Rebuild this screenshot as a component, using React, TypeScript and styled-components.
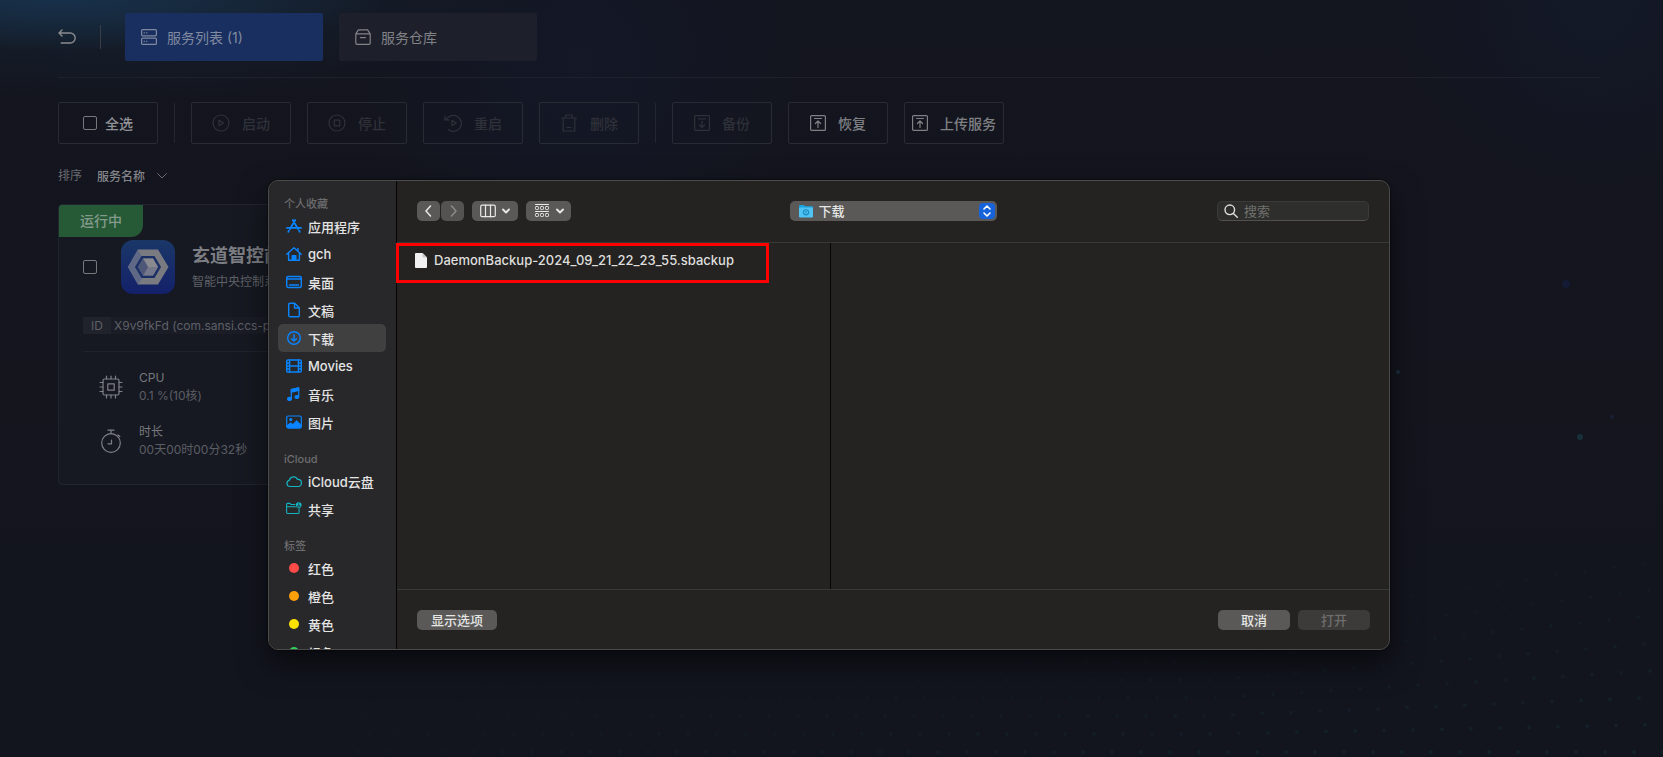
import React from 'react';
import styled, { createGlobalStyle, css } from 'styled-components';

const Global = createGlobalStyle`
  * { box-sizing: border-box; }
  html, body { margin: 0; min-height: 100%; background: #13141d; }
  body, button, input, select {
    font-family: Inter, 'Noto Sans CJK SC', sans-serif;
  }
  h2, h3, p, ul, dl, dd { margin: 0; padding: 0; }
  ul { list-style: none; }
  button { cursor: pointer; }
`;

/* ---------- page ---------- */

const Page = styled.div`
  position: relative;
  min-height: 100vh;
  padding: 13px 63px 40px 58px;
  overflow: hidden;
  color: #7f8086;
  background:
    radial-gradient(ellipse 330px 50px at 60px 0, #18304a 0%, rgba(24, 48, 74, 0) 100%),
    radial-gradient(ellipse 420px 100px at 100px 0, rgba(22, 40, 56, 0.7) 0%, rgba(22, 40, 56, 0) 100%),
    radial-gradient(circle 220px at 580px 60px, rgba(20, 26, 44, 0.6) 0%, rgba(20, 26, 44, 0) 100%),
    radial-gradient(circle 200px at 96% 0, rgba(20, 26, 42, 0.8) 0%, rgba(20, 26, 42, 0) 100%),
    linear-gradient(180deg, #13151f 0%, #14151d 50%, #12151e 100%);
`;

const Starfield = styled.svg`
  position: absolute;
  right: 0;
  bottom: 0;
  width: 100%;
  height: 100%;
  pointer-events: none;
`;

const Header = styled.header`
  display: flex;
  align-items: center;
  gap: 24px;
  height: 65px;
  padding-bottom: 16px;
  border-bottom: 1px solid #1e212b;
`;

const BackButton = styled.button`
  display: flex;
  padding: 0;
  border: 0;
  background: none;
  color: #8a8b8f;
`;

const Divider = styled.span<{ $height: number; $tone: string }>`
  width: 1px;
  height: ${p => p.$height}px;
  background: ${p => p.$tone};
`;

const Tabs = styled.nav`
  display: flex;
  gap: 16px;
`;

const Tab = styled.button<{ $active?: boolean }>`
  display: flex;
  align-items: center;
  gap: 10px;
  width: 198px;
  height: 48px;
  padding: 0 16px;
  border: 0;
  border-radius: 2px;
  font-size: 14px;
  color: ${p => (p.$active ? '#8089a0' : '#828387')};
  background: ${p => (p.$active ? '#182f5f' : '#1d1f2b')};
`;

const Toolbar = styled.div`
  display: flex;
  align-items: center;
  gap: 16px;
  margin-top: 24px;
`;

const actionBox = css`
  display: flex;
  align-items: center;
  justify-content: center;
  width: 100px;
  height: 42px;
  padding: 0;
  border: 1px solid #292b34;
  border-radius: 2px;
  background: none;
  font-size: 14px;
  font-weight: 500;
  white-space: nowrap;
`;

const Action = styled.button`
  ${actionBox}
  gap: 12px;
  color: #7f8084;
  &:disabled { color: #2f3139; cursor: default; }
`;

const SelectAll = styled.label`
  ${actionBox}
  gap: 8px;
  color: #919296;
`;

const Checkbox = styled.input`
  appearance: none;
  width: 14px;
  height: 14px;
  margin: 0;
  border: 1px solid #77787c;
  border-radius: 2px;
`;

const SortRow = styled.div`
  display: flex;
  align-items: center;
  gap: 15px;
  height: 20px;
  margin-top: 22px;
  font-size: 12px;
  line-height: 18px;
  color: #696a70;
`;

const SortField = styled.span`
  display: flex;
  align-items: center;
  gap: 11px;
`;

const SortSelect = styled.select`
  appearance: none;
  padding: 0;
  border: 0;
  background: none;
  font-size: 12px;
  font-weight: 500;
  color: #85868a;
`;

/* ---------- service card ---------- */

const Card = styled.article`
  position: relative;
  width: 376px;
  min-height: 281px;
  margin-top: 18px;
  padding: 35px 24px 0;
  border: 1px solid #20252e;
  border-radius: 4px;
  background: #161921;
`;

const Status = styled.span`
  position: absolute;
  top: 0;
  left: 0;
  width: 84px;
  height: 32px;
  border-radius: 3px 0 12px 0;
  background: #265a37;
  font-size: 14px;
  font-weight: 500;
  line-height: 32px;
  text-align: center;
  color: #859a8c;
`;

const CardHead = styled.div`
  display: flex;
  align-items: center;
`;

const AppIcon = styled.svg`
  width: 54px;
  height: 54px;
  margin: 0 17px 0 24px;
`;

const CardTitle = styled.h2`
  font-size: 18px;
  font-weight: 600;
  line-height: 26px;
  white-space: nowrap;
  color: #7d7e83;
`;

const CardNote = styled.p`
  margin-top: 4px;
  font-size: 12px;
  line-height: 18px;
  color: #5f6168;
`;

const IdRow = styled.p`
  display: flex;
  margin-top: 23px;
  gap: 3px;
  height: 17px;
  font-size: 12px;
  line-height: 17px;
  white-space: nowrap;
  color: #5f6168;
  background: #1a1c26;
`;

const IdTag = styled.span`
  width: 28px;
  text-align: center;
  background: #20222c;
`;

const Stats = styled.dl`
  display: grid;
  gap: 18px;
  margin-top: 17px;
  padding: 17px 0 0 16px;
  border-top: 1px solid #20232c;
`;

const Stat = styled.div`
  display: grid;
  grid-template-columns: 24px 1fr;
  column-gap: 16px;
  align-items: center;
  font-size: 12px;
  line-height: 18px;
`;

const StatIcon = styled.span`
  grid-row: span 2;
  display: flex;
`;

const StatName = styled.dt`color: #77787d;`;
const StatValue = styled.dd`color: #5c5e65;`;

/* ---------- file dialog ---------- */

const DialogLayer = styled.div`
  position: absolute;
  inset: 0;
  padding: 180px 273px 0 268px;
`;

const Dialog = styled.section`
  position: relative;
  display: grid;
  grid-template-columns: 128px minmax(0, 1fr);
  height: 470px;
  border: 1px solid #4b4b4a;
  border-radius: 10px;
  background: #242321;
  box-shadow: 0 14px 30px rgba(0, 0, 0, 0.5), 0 0 2px #000;
  font-size: 13px;
  color: #dededd;
`;

const Sidebar = styled.aside`
  overflow: hidden;
  padding: 13px 9px 0;
  border-right: 1px solid #050505;
  border-radius: 9px 0 0 9px;
  background: #28282a;
`;

const Group = styled.section`
  & + & { margin-top: 13px; }
`;

const GroupTitle = styled.h3`
  height: 18px;
  padding-left: 6px;
  font-size: 11px;
  font-weight: 500;
  line-height: 20px;
  color: #6d6d6f;
`;

const Place = styled.button<{ $selected?: boolean; $tint?: string }>`
  display: flex;
  align-items: center;
  gap: 6px;
  width: 108px;
  height: 28px;
  padding: 0 8px;
  border: 0;
  border-radius: 5px;
  background: ${p => (p.$selected ? '#404041' : 'none')};
  font-size: 13px;
  font-weight: 500;
  white-space: nowrap;
  color: #e4e4e4;
  svg { flex: none; color: ${p => p.$tint ?? '#0a84ff'}; }
`;

const Dot = styled.span<{ $color: string }>`
  width: 10px;
  height: 10px;
  margin: 0 3px;
  border-radius: 50%;
  background: ${p => p.$color};
`;

const Main = styled.div`
  display: grid;
  grid-template-rows: 62px 1fr 60px;
`;

const DialogBar = styled.div`
  display: grid;
  grid-template-columns: 1fr 207px 1fr;
  align-items: center;
  padding: 0 20px 1px;
  border-bottom: 1px solid #383836;
`;

const BarGroup = styled.div`
  display: flex;
  gap: 8px;
`;

const NavPair = styled.div`
  display: flex;
  gap: 1px;
`;

const ToolButton = styled.button<{ $width: number }>`
  display: flex;
  align-items: center;
  justify-content: center;
  gap: 6px;
  width: ${p => p.$width}px;
  height: 20px;
  padding: 0;
  border: 0;
  border-radius: 5px;
  background: #5a5957;
  color: #e9e9e8;
  &:disabled { background: #545351; color: #8c8c8a; }
`;

const FolderField = styled.label`
  display: flex;
  align-items: center;
  gap: 6px;
  height: 20px;
  padding: 0 2px 0 9px;
  border-radius: 5px;
  background: #5a5957;
`;

const FolderSelect = styled.select`
  flex: 1;
  appearance: none;
  padding: 0;
  border: 0;
  background: none;
  font-size: 13px;
  font-weight: 500;
  color: #e6e6e5;
`;

const Stepper = styled.svg`
  width: 16px;
  height: 16px;
  border-radius: 4px;
  background: #1763dc;
`;

const SearchField = styled.label`
  display: flex;
  align-items: center;
  justify-self: end;
  gap: 6px;
  width: 152px;
  height: 20px;
  padding: 0 6px;
  border: 1px solid #3a3a38;
  border-bottom-color: #50504e;
  border-radius: 5px;
  background: #2e2e2c;
  svg { flex: none; }
`;

const SearchInput = styled.input`
  width: 100%;
  min-width: 0;
  padding: 0;
  border: 0;
  background: none;
  font-size: 13px;
  color: #e0e0e0;
  outline: none;
  &::placeholder { color: #71716f; opacity: 1; }
`;

const Columns = styled.div`
  display: grid;
  grid-template-columns: 433px 1fr;
`;

const Column = styled.ul`
  & + & { border-left: 1px solid #050505; }
`;

const FileRow = styled.li`
  display: flex;
  align-items: center;
  gap: 7px;
  width: 373px;
  height: 40px;
  margin-left: -1px;
  padding: 0 16px 6px;
  border: 3px solid #fe0000;
  font-weight: 500;
  white-space: nowrap;
`;

const Footer = styled.footer`
  display: flex;
  align-items: center;
  gap: 8px;
  padding: 0 19px 0 20px;
  border-top: 1px solid #383836;
`;

const FooterButton = styled.button<{ $width: number }>`
  width: ${p => p.$width}px;
  height: 20px;
  padding: 0;
  border: 0;
  border-radius: 5px;
  background: #5a5957;
  font-size: 13px;
  font-weight: 500;
  line-height: 20px;
  color: #e6e6e5;
  &:first-child { margin-right: auto; }
  &:disabled { background: #3c3b39; color: #6d6d6b; }
`;

/* ---------- icons ---------- */

type IconProps = { size?: number; w?: number; vb?: string; sw?: number; children: React.ReactNode };
const Icon = ({ size = 16, w, vb = '0 0 16 16', sw = 1.2, children }: IconProps) => (
  <svg width={w ?? size} height={size} viewBox={vb} fill="none" stroke="currentColor" strokeWidth={sw} strokeLinejoin="round" strokeLinecap="round" aria-hidden="true">
    {children}
  </svg>
);

const icons = {
  back: <Icon size={18} vb="0 0 18 18" sw={1.4}><path d="M1 5h11.2a5 5 0 0 1 0 10H3.2M4 2 1 5l3 3" /></Icon>,
  servers: <Icon><rect x=".6" y=".6" width="14.8" height="6.2" rx="1" /><rect x=".6" y="9.2" width="14.8" height="6.2" rx="1" /><path d="M3.2 3.6v.4M5.8 3.6v.4M3.2 12.2v.4M5.8 12.2v.4" /></Icon>,
  store: <Icon><path d="M.8 4.8 3.4.8h9.2l2.6 4v9.2a1.3 1.3 0 0 1-1.3 1.3H2.1A1.3 1.3 0 0 1 .8 14zM.8 4.8h14.4M5.5 8.6h5" /></Icon>,
  start: <Icon size={18} vb="0 0 18 18"><circle cx="9" cy="9" r="8" /><path d="M7 6.3v5.4L11.4 9z" /></Icon>,
  stop: <Icon size={18} vb="0 0 18 18"><circle cx="9" cy="9" r="8" /><rect x="6.2" y="6.2" width="5.6" height="5.6" /></Icon>,
  restart: <Icon size={18} vb="0 0 18 18"><path d="M2.4 5.4A8 8 0 1 1 4.2 15.5M1 2v4h4.2M8 6.3v5.4L12.2 9z" /></Icon>,
  trash: <Icon size={18} vb="0 0 18 18"><path d="M1.5 4h15M5.8 4V1h6.4v3M3.2 4v13h11.6V4M7 13.5h4" /></Icon>,
  backup: <Icon><rect x=".6" y=".6" width="14.8" height="14.8" rx="1" /><path d="M4.5 3.8h7M8 6v6.5M5.4 10 8 12.5l2.6-2.5" /></Icon>,
  restore: <Icon><rect x=".6" y=".6" width="14.8" height="14.8" rx="1" /><path d="M4.5 3.5h7M8 12.5V6M5.4 8.5 8 6l2.6 2.5" /></Icon>,
  chevron: <Icon size={10} vb="0 0 10 10" sw={1}><path d="m.5 2.5 4.5 4.5 4.5-4.5" /></Icon>,
  cpu: <Icon size={24} vb="0 0 24 24"><rect x="4" y="4" width="16" height="16" rx="1.5" /><rect x="8.8" y="8.8" width="6.4" height="6.4" /><path d="M7.5 4V1M12 4V1M16.5 4V1M7.5 23v-3M12 23v-3M16.5 23v-3M4 7.5H1M4 12H1M4 16.5H1M23 7.5h-3M23 12h-3M23 16.5h-3" /></Icon>,
  clock: <Icon size={24} vb="0 0 24 24"><circle cx="12" cy="14" r="9.3" /><path d="M9 1.2h6M12 1.2v3.5M19 6l1.8 1.5M12.5 11v3.8H9" /></Icon>,
  apps: <Icon sw={1.8}><path d="M9.2 2 4 11M6.8 2 12 11M1 9.9h8.6M12.4 9.9H15M2.9 12.6 2.3 13.800M13.100 12.600l.6 1.200" /></Icon>,
  home: <Icon sw={1.4}><path d="m.8 8.3 7.2-6.6 7.2 6.6M2.6 7v7.2h10.8V7M12 4.6V2.5" /><path d="M6.2 14.2V9.8h3.6v4.4z" fill="currentColor" /></Icon>,
  desktop: <Icon sw={1.4}><rect x=".7" y="2.5" width="14.6" height="11" rx="1.5" /><path d="M.7 5h14.6M3.5 11h9" /></Icon>,
  doc: <Icon sw={1.4}><path d="M2.7 2.6a1.4 1.4 0 0 1 1.4-1.4h4.6l4.6 4.6v7.6a1.4 1.4 0 0 1-1.4 1.4H4.1a1.4 1.4 0 0 1-1.4-1.4zM8.5 1.4V6h4.6" /></Icon>,
  download: <Icon sw={1.4}><circle cx="8" cy="8" r="6.3" /><path d="M8 4.6V11M5.5 8.7 8 11.1l2.5-2.4" /></Icon>,
  film: <Icon sw={1.4}><rect x=".7" y="2" width="14.6" height="12" rx="1.2" /><path d="M3.6 2v12M12.4 2v12M3.6 8h8.8M.8 5h2.6M.8 8h2.6M.8 11h2.6M12.6 5h2.6M12.6 8h2.6M12.6 11h2.6" /></Icon>,
  music: <Icon><path d="M5.3 12.5V3.7l7.4-1.9v8.7" /><path d="M5.3 3.7l7.4-1.9v2.6L5.3 6.2z" fill="currentColor" /><ellipse cx="3.5" cy="12.9" rx="1.9" ry="1.5" fill="currentColor" /><ellipse cx="10.9" cy="11" rx="1.9" ry="1.5" fill="currentColor" /></Icon>,
  picture: <Icon><rect x=".7" y="2" width="14.6" height="12" rx="1.5" /><circle cx="4.8" cy="5.6" r="1" fill="currentColor" /><path d="m1.2 12 3.4-3 2.3 1.8L10.6 7l4.4 4.4v1.4a1 1 0 0 1-1 1H2z" fill="currentColor" /></Icon>,
  cloud: <Icon><path d="M4 13.5a3.1 3.1 0 0 1-.7-6.1 4.4 4.4 0 0 1 8.3-.9 3.5 3.5 0 0 1 .6 7z" /></Icon>,
  shared: <Icon vb="0 1 18 16"><path d="M10 4H5.7L4.4 2.7H1.7a1 1 0 0 0-1 1V13a1 1 0 0 0 1 1h12a1 1 0 0 0 1-1V8.5M.7 6.5h10" /><circle cx="14.3" cy="4.5" r="3.2" fill="currentColor" stroke="none" /><path d="M14.3 3.2v.4M13 6c.5-.8 2.1-.8 2.6 0" stroke="#28282a" /></Icon>,
  left: <Icon size={12} vb="0 0 12 12" sw={1.5}><path d="M7.5 1 3 6l4.5 5" /></Icon>,
  right: <Icon size={12} vb="0 0 12 12" sw={1.5}><path d="m4.5 1 4.5 5-4.5 5" /></Icon>,
  columns: <Icon size={14} w={16} vb="0 0 16 14"><rect x=".7" y="1.2" width="14.6" height="11.5" rx="1.5" /><path d="M5.5 1.2v11.5M10.5 1.2v11.5" /></Icon>,
  down: <Icon size={8} vb="0 0 8 8" sw={1.8}><path d="m1 2.5 3 3 3-3" /></Icon>,
  grid: (
    <Icon size={14} w={16} vb="0 0 16 14" sw={1}>
      <path d="M1.5.5h13M1.5 7.5h13" />
      {[3, 8, 13].map(x => [4, 11].map(y => <rect key={`${x}-${y}`} x={x - 1.5} y={y - 1.5} width="3" height="3" rx=".8" />))}
    </Icon>
  ),
  search: <Icon size={14} vb="0 0 14 14" sw={1.4}><circle cx="5.8" cy="5.8" r="4.8" /><path d="m9.4 9.4 3.9 3.9" /></Icon>,
};

const FolderIcon = () => (
  <svg width="14" height="14" viewBox="0 0 14 14" aria-hidden="true">
    <path d="M0 2a1 1 0 0 1 1-1h4l1.3 1.2H13a1 1 0 0 1 1 1V5H0z" fill="#1ba3df" />
    <rect y="3.5" width="14" height="10" rx="1" fill="#4fc3f4" />
    <circle cx="7" cy="8.3" r="2.6" fill="none" stroke="#1c89bf" strokeWidth="1.1" />
    <path d="M7 7v2.5" stroke="#1c89bf" />
  </svg>
);

const FileIcon = () => (
  <svg width="12" height="15" viewBox="0 0 12 15" aria-hidden="true">
    <path d="M0 1a1 1 0 0 1 1-1h6.5L12 4.5V14a1 1 0 0 1-1 1H1a1 1 0 0 1-1-1z" fill="#f1f1f1" />
    <path d="M7.5 0 12 4.5H8.5a1 1 0 0 1-1-1z" fill="#c9c9c9" />
  </svg>
);

const AppLogo = () => (
  <AppIcon viewBox="0 0 54 54" aria-hidden="true">
    <defs>
      <linearGradient id="tile" x1="0" y1="0" x2="0" y2="1"><stop offset="0" stopColor="#1a3768" /><stop offset="1" stopColor="#14216a" /></linearGradient>
    </defs>
    <rect width="54" height="54" rx="12" fill="url(#tile)" />
    <path d="M17 9.5h20L47.5 27 37 44.500H17L7 27z" fill="#7a7b80" />
    <path d="M17 9.5 7 27l10 17.500 4-6L14.500 27l6-11z" fill="#5f6885" />
    <path d="M20.5 16h13L40 27l-6.500 11h-13L14 27z" fill="#1a2f66" />
    <path d="M22 18.5h10l5 8.500-5 8.500H22L17 27z" fill="#6d7184" />
    <path d="M22 18.5h10l5 8.500H27z" fill="#888a8f" />
    <path d="M27 27h10l-5 8.500H22z" fill="#74788a" />
    <path d="M22 18.5 27 27l-5 8.500L17 27z" fill="#4f5779" />
  </AppIcon>
);

/* ---------- data ---------- */

const favorites = [
  { name: '应用程序', icon: icons.apps },
  { name: 'gch', icon: icons.home },
  { name: '桌面', icon: icons.desktop },
  { name: '文稿', icon: icons.doc },
  { name: '下载', icon: icons.download, selected: true },
  { name: 'Movies', icon: icons.film },
  { name: '音乐', icon: icons.music },
  { name: '图片', icon: icons.picture },
];

const cloudPlaces = [
  { name: 'iCloud云盘', icon: icons.cloud },
  { name: '共享', icon: icons.shared },
];

const tags = [
  { name: '红色', color: '#ff4b47' },
  { name: '橙色', color: '#ff9f0a' },
  { name: '黄色', color: '#ffe000' },
  { name: '绿色', color: '#30d158' },
];

const runActions = [
  { name: '启动', icon: icons.start },
  { name: '停止', icon: icons.stop },
  { name: '重启', icon: icons.restart },
  { name: '删除', icon: icons.trash },
];

const dataActions = [
  { name: '备份', icon: icons.backup, disabled: true },
  { name: '恢复', icon: icons.restore },
  { name: '上传服务', icon: icons.restore },
];

const stars = [
  [1398, 372, 2, '#1a2f3e'], [1566, 284, 4, '#141a33'], [1580, 437, 3, '#17313a'], [1612, 417, 2, '#191f35'],
] as const;

const dust = Array.from({ length: 8 }, (_, row) =>
  Array.from({ length: 46 }, (_, col) => ({
    x: 1663 - col * 29 + ((row * 11) % 17),
    y: 752 - row * 18 - Math.max(0, 16 - col) * row * 0.6,
    o: Math.max(0, 0.9 - row * 0.08 - col * 0.014),
  })),
).flat();

export default function App() {
  return (
    <>
      <Global />
      <Page>
        <Starfield viewBox="0 0 1663 757" preserveAspectRatio="xMaxYMax slice" aria-hidden="true">
          {dust.map((d, i) => <circle key={i} cx={d.x} cy={d.y} r="2" fill="#15232d" opacity={d.o} />)}
          {stars.map(([x, y, r, c]) => <circle key={x} cx={x} cy={y} r={r} fill={c} />)}
        </Starfield>

        <Header>
          <BackButton aria-label="返回">{icons.back}</BackButton>
          <Divider $height={24} $tone="#3a3d45" />
          <Tabs>
            <Tab $active>{icons.servers}服务列表 (1)</Tab>
            <Tab>{icons.store}服务仓库</Tab>
          </Tabs>
        </Header>

        <Toolbar>
          <SelectAll><Checkbox type="checkbox" />全选</SelectAll>
          <Divider $height={40} $tone="#23252f" />
          {runActions.map(a => <Action key={a.name} disabled>{a.icon}{a.name}</Action>)}
          <Divider $height={40} $tone="#23252f" />
          {dataActions.map(a => <Action key={a.name} disabled={a.disabled}>{a.icon}{a.name}</Action>)}
        </Toolbar>

        <SortRow>
          <label htmlFor="sort">排序</label>
          <SortField>
            <SortSelect id="sort"><option>服务名称</option></SortSelect>
            {icons.chevron}
          </SortField>
        </SortRow>

        <Card>
          <Status>运行中</Status>
          <CardHead>
            <Checkbox type="checkbox" aria-label="选择服务" />
            <AppLogo />
            <div>
              <CardTitle>玄道智控前端</CardTitle>
              <CardNote>智能中央控制系统</CardNote>
            </div>
          </CardHead>
          <IdRow><IdTag>ID</IdTag>X9v9fkFd (com.sansi.ccs-p</IdRow>
          <Stats>
            <Stat><StatIcon>{icons.cpu}</StatIcon><StatName>CPU</StatName><StatValue>0.1 %(10核)</StatValue></Stat>
            <Stat><StatIcon>{icons.clock}</StatIcon><StatName>时长</StatName><StatValue>00天00时00分32秒</StatValue></Stat>
          </Stats>
        </Card>

        <DialogLayer>
          <Dialog role="dialog" aria-label="打开文件">
            <Sidebar>
              <Group>
                <GroupTitle>个人收藏</GroupTitle>
                {favorites.map(f => <Place key={f.name} $selected={f.selected}>{f.icon}{f.name}</Place>)}
              </Group>
              <Group>
                <GroupTitle>iCloud</GroupTitle>
                {cloudPlaces.map(c => <Place key={c.name} $tint="#12b5c4">{c.icon}{c.name}</Place>)}
              </Group>
              <Group>
                <GroupTitle>标签</GroupTitle>
                {tags.map(t => <Place key={t.name}><Dot $color={t.color} />{t.name}</Place>)}
              </Group>
            </Sidebar>
            <Main>
              <DialogBar>
                <BarGroup>
                  <NavPair>
                    <ToolButton $width={23} aria-label="后退">{icons.left}</ToolButton>
                    <ToolButton $width={23} aria-label="前进" disabled>{icons.right}</ToolButton>
                  </NavPair>
                  <ToolButton $width={46} aria-label="分栏">{icons.columns}{icons.down}</ToolButton>
                  <ToolButton $width={45} aria-label="分组">{icons.grid}{icons.down}</ToolButton>
                </BarGroup>
                <FolderField>
                  <FolderIcon />
                  <FolderSelect aria-label="位置"><option>下载</option></FolderSelect>
                  <Stepper viewBox="0 0 16 16" fill="none" stroke="#fff" strokeWidth="1.6" strokeLinecap="round" strokeLinejoin="round" aria-hidden="true">
                    <path d="M5 6l3-3 3 3M5 10l3 3 3-3" />
                  </Stepper>
                </FolderField>
                <SearchField>{icons.search}<SearchInput aria-label="搜索" placeholder="搜索" /></SearchField>
              </DialogBar>
              <Columns>
                <Column><FileRow><FileIcon />DaemonBackup-2024_09_21_22_23_55.sbackup</FileRow></Column>
                <Column />
              </Columns>
              <Footer>
                <FooterButton $width={80}>显示选项</FooterButton>
                <FooterButton $width={72}>取消</FooterButton>
                <FooterButton $width={72} disabled>打开</FooterButton>
              </Footer>
            </Main>
          </Dialog>
        </DialogLayer>
      </Page>
    </>
  );
}
